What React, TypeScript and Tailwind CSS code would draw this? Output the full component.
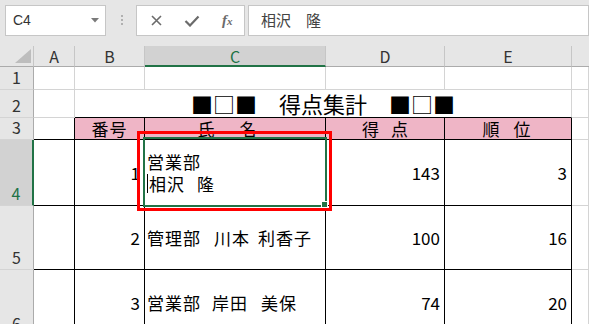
import { ReactNode } from "react";

const grid = "border-r border-b border-[#d4d4d4] bg-white";
const boxed = "border-r border-b border-black bg-white";
const pinkBoxed = "border-r border-b border-black bg-[#efb5c6]";

function ColHead({ label, active }: { label: string; active?: boolean }) {
  return (
    <div
      className={
        active
          ? "flex items-center justify-center bg-[#d2d2d2] border-r border-[#c6c6c6] border-b-2 border-b-[#217346] text-[#217346] text-[16px] leading-none"
          : "flex items-center justify-center bg-[#e6e6e6] border-r border-[#c6c6c6] border-b border-b-[#ababab] text-[#333] text-[16px] leading-none"
      }
    >
      {label}
    </div>
  );
}

function RowHead({ n, active }: { n: number; active?: boolean }) {
  return (
    <div
      className={
        active
          ? "flex items-end justify-center pb-[4px] bg-[#d2d2d2] border-r-2 border-r-[#217346] border-b border-b-[#d4d4d4] text-[#217346] text-[16px] leading-none"
          : "flex items-end justify-center pb-[4px] bg-[#e6e6e6] border-r border-r-[#ababab] border-b border-b-[#d4d4d4] text-[#333] text-[16px] leading-none"
      }
    >
      {n}
    </div>
  );
}

function Num({ v }: { v: number }) {
  return <div className={`${boxed} flex items-center justify-end pr-[4px] text-[17px] leading-none`}>{v}</div>;
}

function Gap({ w }: { w: string }) {
  return <span className={`inline-block ${w}`} />;
}

function Pair({ a, b, className }: { a: ReactNode; b: ReactNode; className: string }) {
  return (
    <div className={`${pinkBoxed} flex items-center justify-center text-[17px] leading-none ${className}`}>
      <span>{a}</span>
      <span>{b}</span>
    </div>
  );
}

export default function App() {
  return (
    <div className="w-[589px] h-[324px] overflow-hidden bg-white font-['Noto_Sans_CJK_JP',sans-serif] text-black">
      {/* formula bar */}
      <div className="h-[46px] bg-[#e6e6e6] flex items-start pt-[5px] pl-[5px]">
        <div className="w-[102px] h-[31px] bg-white border border-[#c6c6c6] flex items-center justify-between pl-[7px] pr-[6px]">
          <span className="font-['Liberation_Sans',sans-serif] text-[14px] text-[#333]">C4</span>
          <svg width="8" height="5" viewBox="0 0 8 5">
            <path d="M0 0h8L4 4.5z" fill="#7a7a7a" />
          </svg>
        </div>
        <div className="ml-[15px] mt-[10px] flex flex-col gap-[2px]">
          <span className="w-[2px] h-[2px] bg-[#b0b0b0]" />
          <span className="w-[2px] h-[2px] bg-[#b0b0b0]" />
          <span className="w-[2px] h-[2px] bg-[#b0b0b0]" />
        </div>
        <div className="ml-[13px] w-[110px] h-[31px] bg-white border border-[#c6c6c6] flex items-center pl-[14px]">
          <svg width="11" height="11" viewBox="0 0 11 11">
            <path d="M1 1l9 9M10 1l-9 9" stroke="#6b6b6b" strokeWidth="1.6" />
          </svg>
          <svg width="16" height="12" viewBox="0 0 16 12" className="ml-[22px]">
            <path d="M1.5 6l4.5 4.5L14.5 1.5" stroke="#6b6b6b" strokeWidth="2.2" fill="none" />
          </svg>
          <span className="ml-[22px] font-['Liberation_Serif',serif] italic font-bold text-[15px] text-[#6b6b6b] leading-none">
            f<span className="text-[11px]">x</span>
          </span>
        </div>
        <div className="ml-[3px] w-[345px] h-[31px] bg-white border border-[#c6c6c6] flex items-center pl-[12px] text-[15px] text-[#444]">
          相沢　隆
        </div>
      </div>

      {/* sheet */}
      <div className="relative grid grid-cols-[34px_41px_70px_181px_119px_127px_1fr] grid-rows-[21px_23px_28px_22px_66px_64px_66px]">
        <div className="bg-[#e6e6e6] border-r border-[#c6c6c6] border-b border-b-[#ababab] flex items-end justify-end pr-[2px] pb-[3px]">
          <svg width="16" height="14" viewBox="0 0 16 14">
            <path d="M16 0V14H0z" fill="#bdbdbd" />
          </svg>
        </div>
        <ColHead label="A" />
        <ColHead label="B" />
        <ColHead label="C" active />
        <ColHead label="D" />
        <ColHead label="E" />
        <div className="bg-[#e6e6e6] border-b border-b-[#ababab]" />

        {/* row 1 */}
        <RowHead n={1} />
        <div className={grid} />
        <div className={grid} />
        <div className={grid} />
        <div className={grid} />
        <div className={grid} />
        <div className={grid} />

        {/* row 2 - title merged B:E */}
        <RowHead n={2} />
        <div className={grid} />
        <div className="col-span-4 border-b border-black border-r border-r-[#d4d4d4] flex items-end justify-center pb-[3px] text-[22px] leading-none">
          ■□■　得点集計　■□■
        </div>
        <div className={grid} />

        {/* row 3 */}
        <RowHead n={3} />
        <div className={boxed} />
        <div className={`${pinkBoxed} flex items-center justify-center text-[17px] leading-none tracking-[1px]`}>番号</div>
        <Pair a="氏" b="名" className="gap-[25px] pr-[16px]" />
        <Pair a="得" b="点" className="gap-[12px]" />
        <Pair a="順" b="位" className="gap-[14px] pr-[3px]" />
        <div className={grid} />

        {/* row 4 */}
        <RowHead n={4} active />
        <div className={boxed} />
        <Num v={1} />
        <div className={`${boxed} flex flex-col justify-center pl-[2px] text-[17px] leading-[22px] tracking-[1px]`}>
          <span>営業部</span>
          <span className="flex items-center">
            <span className="inline-block w-px h-[19px] bg-black mr-[1px]" />
            相沢
            <Gap w="w-[12px]" />隆
          </span>
        </div>
        <Num v={143} />
        <Num v={3} />
        <div className={grid} />

        {/* row 5 */}
        <RowHead n={5} />
        <div className={boxed} />
        <Num v={2} />
        <div className={`${boxed} flex items-center pl-[2px] text-[17px] leading-none tracking-[1px]`}>
          管理部<Gap w="w-[13px]" />川本<Gap w="w-[8px]" />利香子
        </div>
        <Num v={100} />
        <Num v={16} />
        <div className={grid} />

        {/* row 6 */}
        <RowHead n={6} />
        <div className={boxed} />
        <Num v={3} />
        <div className={`${boxed} flex items-center pl-[2px] text-[17px] leading-none tracking-[1px]`}>
          営業部<Gap w="w-[11px]" />岸田<Gap w="w-[13px]" />美保
        </div>
        <Num v={74} />
        <Num v={20} />
        <div className={grid} />

        {/* selection + red highlight */}
        <div className="absolute left-[143px] top-[91px] w-[184px] h-[70px] border-2 border-[#217346]" />
        <div className="absolute left-[321px] top-[155px] w-[7px] h-[7px] bg-[#217346] border border-white" />
        <div className="absolute left-[137px] top-[85px] w-[195px] h-[80px] border-[3px] border-[#ff0000]" />
      </div>
    </div>
  );
}
